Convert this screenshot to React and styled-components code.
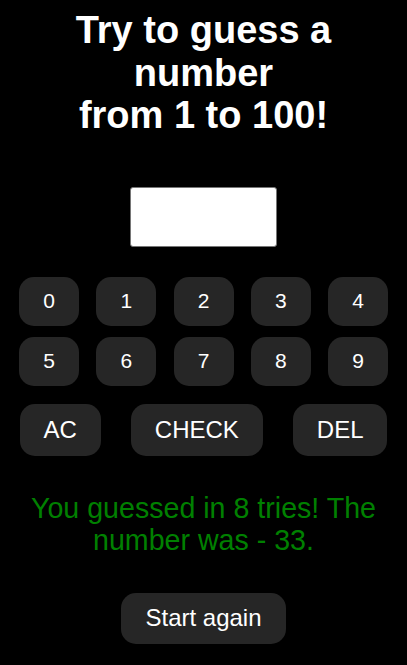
import React from 'react'
import styled, { createGlobalStyle } from 'styled-components'

const GlobalStyle = createGlobalStyle`
  html, body {
    margin: 0;
    padding: 0;
    background: #000;
  }
  body {
    font-family: 'Liberation Sans', Arial, sans-serif;
    color: #fff;
  }
`

const Page = styled.main`
  display: flex;
  flex-direction: column;
  align-items: center;
  min-height: 665px;
  padding-top: 9px;
  box-sizing: border-box;
`

const Title = styled.h1`
  margin: 0;
  font-size: 38px;
  font-weight: 700;
  line-height: 42.5px;
  text-align: center;
`

const Display = styled.input`
  width: 147px;
  height: 60px;
  margin-top: 50px;
  box-sizing: border-box;
  border: 1px solid #767676;
  border-radius: 3px;
  background: #fff;
  font-size: 24px;
  text-align: center;
  outline: none;
`

const Keypad = styled.div`
  display: grid;
  grid-template-columns: repeat(5, 60px);
  justify-content: space-between;
  row-gap: 11px;
  width: 369px;
  margin-top: 30px;
`

const Key = styled.button`
  height: 49px;
  border: none;
  border-radius: 15px;
  background: #262626;
  color: #fff;
  font-family: 'Liberation Sans', Arial, sans-serif;
  font-size: ${({ $size }) => $size || 21}px;
  padding: ${({ $wide }) => ($wide ? '0 24px' : '0')};
  cursor: pointer;
`

const Actions = styled.div`
  display: flex;
  justify-content: space-between;
  width: 368px;
  margin-top: 18px;
`

const ActionKey = styled(Key)`
  height: 52px;
`

const Message = styled.p`
  margin: 36px 0 0;
  width: 370px;
  color: #008000;
  font-size: 28.6px;
  line-height: 32px;
  text-align: center;
`

const Restart = styled(Key)`
  height: 51px;
  margin-top: 37px;
`

const digits = [0, 1, 2, 3, 4, 5, 6, 7, 8, 9]

export default function App() {
  return (
    <>
      <GlobalStyle />
      <Page>
        <Title>
          Try to guess a
          <br />
          number
          <br />
          from 1 to 100!
        </Title>
        <Display type="text" readOnly value="" />
        <Keypad>
          {digits.map((d) => (
            <Key key={d}>{d}</Key>
          ))}
        </Keypad>
        <Actions>
          <ActionKey $wide $size={24}>AC</ActionKey>
          <ActionKey $wide $size={24}>CHECK</ActionKey>
          <ActionKey $wide $size={24}>DEL</ActionKey>
        </Actions>
        <Message>You guessed in 8 tries! The number was - 33.</Message>
        <Restart $wide $size={24}>Start again</Restart>
      </Page>
    </>
  )
}
